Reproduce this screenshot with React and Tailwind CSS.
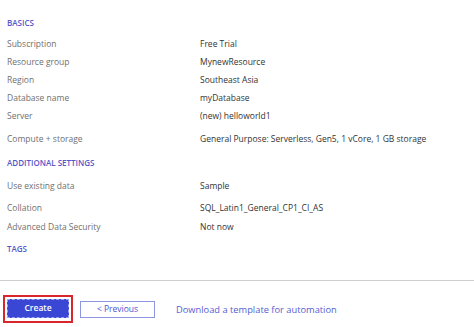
import React from 'react';

// Summary rows shown on the review + create step.
const basics = [
  ['Subscription', 'Free Trial'],
  ['Resource group', 'MynewResource'],
  ['Region', 'Southeast Asia'],
  ['Database name', 'myDatabase'],
  ['Server', '(new) helloworld1'],
];

function SectionTitle({ children, className = '' }) {
  return (
    <div className={`h-[12px] leading-[12px] text-[8px] font-semibold uppercase text-[#5558c8] ${className}`}>
      {children}
    </div>
  );
}

function Row({ label, value, className = '' }) {
  return (
    <div className={`flex items-center h-[18px] ${className}`}>
      <div className="w-[193px] text-[#707070]">{label}</div>
      <div className="text-[#333333]">{value}</div>
    </div>
  );
}

export default function App() {
  return (
    <div
      className="w-[474px] h-[327px] bg-white flex flex-col text-[8.5px] overflow-hidden"
      style={{ fontFamily: '"Open Sans", "Noto Sans", sans-serif' }}
    >
      <div className="flex-1 px-[7px] pt-[17px]">
        <SectionTitle>Basics</SectionTitle>
        <div className="mt-[6px]">
          {basics.map(([l, v]) => (
            <Row key={l} label={l} value={v} />
          ))}
          <Row label="Compute + storage" value="General Purpose: Serverless, Gen5, 1 vCore, 1 GB storage" className="mt-[5px]" />
        </div>
        <SectionTitle className="mt-[9px]">Additional settings</SectionTitle>
        <div className="mt-[8px]">
          <Row label="Use existing data" value="Sample" />
          <Row label="Collation" value="SQL_Latin1_General_CP1_CI_AS" className="mt-[4px]" />
          <Row label="Advanced Data Security" value="Not now" className="mt-[1px]" />
        </div>
        <SectionTitle className="mt-[7px]">Tags</SectionTitle>
      </div>

      {/* Footer actions */}
      <div className="border-t border-[#cfcfcf] h-[47px] flex items-start pt-[14px] px-[3px]">
        <div className="border-2 border-[#d9262c] px-[2px] pt-[2px] pb-[3px]">
          <button className="block w-[62px] h-[19px] bg-[#3a47d5] text-white font-semibold text-[8.5px] border border-dashed border-[#9aa3f0]">
            Create
          </button>
        </div>
        <button className="ml-[7px] mt-[6px] w-[75px] h-[17px] border border-[#8f96e0] text-[#4b55cf] text-[8.5px]">
          &lt; Previous
        </button>
        <span className="ml-[21px] mt-[8px] text-[#5560d2] text-[9.3px]">Download a template for automation</span>
      </div>
    </div>
  );
}
